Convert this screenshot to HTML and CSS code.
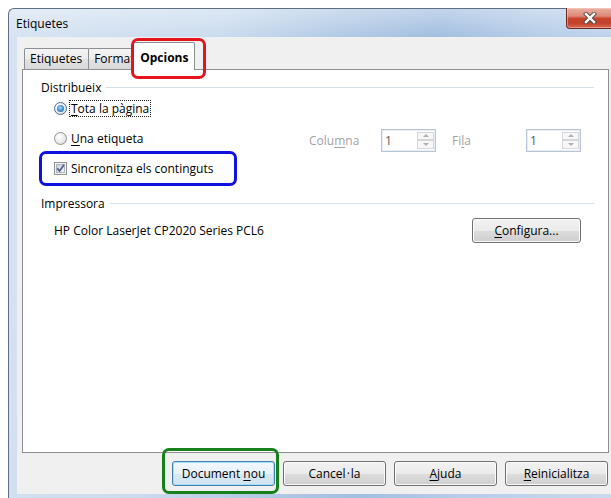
FILE: index.html
```html
<!DOCTYPE html>
<html lang="ca">
<head>
<meta charset="utf-8">
<title>Etiquetes</title>
<link rel="stylesheet" href="styles.css">
</head>
<body>
<div class="window">
  <div class="titlebar">
    <span class="title">Etiquetes</span>
    <span class="close" aria-label="Tanca">
      <svg width="14" height="12" viewBox="0 0 14 12">
        <path d="M3 2 L11 10 M11 2 L3 10" stroke="#4b4b4b" stroke-width="4.2" stroke-linecap="square" fill="none"/>
        <path d="M3 2 L11 10 M11 2 L3 10" stroke="#ffffff" stroke-width="2.4" stroke-linecap="square" fill="none"/>
      </svg>
    </span>
  </div>

  <div class="client">
    <div class="tabs">
      <div class="tab">Etiquetes</div>
      <div class="tab tab-clip">Format</div>
      <div class="tab tab-active">Opcions<span class="mark mark-red"></span></div>
    </div>

    <div class="panel">
      <div class="group-head">Distribueix</div>

      <div class="row row-first">
        <span class="radio radio-on"></span>
        <span class="label focus"><u>T</u>ota la pàgina</span>
      </div>

      <div class="row">
        <span class="radio"></span>
        <span class="label"><u>U</u>na etiqueta</span>
        <span class="spin-group">
          <span class="spin-label">Colu<u>m</u>na</span>
          <span class="spin">
            <span class="spin-val">1</span>
            <span class="spin-btns">
              <span class="spin-up"></span>
              <span class="spin-dn"></span>
            </span>
          </span>
          <span class="spin-label spin-label-2">Fi<u>l</u>a</span>
          <span class="spin">
            <span class="spin-val">1</span>
            <span class="spin-btns">
              <span class="spin-up"></span>
              <span class="spin-dn"></span>
            </span>
          </span>
        </span>
      </div>

      <div class="row">
        <span class="check-label">
          <svg class="chk" width="13" height="13" viewBox="0 0 13 13">
            <defs>
              <linearGradient id="chkfill" x1="0" y1="0" x2="1" y2="1">
                <stop offset="0" stop-color="#cbcfd5"/>
                <stop offset="1" stop-color="#f6f6f6"/>
              </linearGradient>
            </defs>
            <rect x="0.5" y="0.5" width="12" height="12" fill="#f4f4f4" stroke="#8e8f8f"/>
            <rect x="2.5" y="2.5" width="8" height="8" fill="url(#chkfill)" stroke="#aeb3b9"/>
            <path d="M3.2 6.3 L5.6 8.9 L10 2.8" stroke="#4a5c8c" stroke-width="1.7" fill="none"/>
          </svg>
          <span class="label">Sincroni<u>t</u>za els continguts</span>
          <span class="mark mark-blue"></span>
        </span>
      </div>

      <div class="group-head group-head-2">Impressora</div>

      <div class="row row-printer">
        <span class="label">HP Color LaserJet CP2020 Series PCL6</span>
        <button class="btn btn-config"><u>C</u>onfigura...</button>
      </div>
    </div>

    <div class="actions">
      <button class="btn btn-default">Document <u>n</u>ou<span class="mark mark-green"></span></button>
      <button class="btn">Cancel<span class="middot">·</span>la</button>
      <button class="btn"><u>A</u>juda</button>
      <button class="btn"><u>R</u>einicialitza</button>
    </div>
  </div>
</div>
</body>
</html>
```

FILE: styles.css
```css
* {
  box-sizing: border-box;
}

html,
body {
  margin: 0;
  padding: 0;
}

body {
  width: 611px;
  height: 498px;
  overflow: hidden;
  background: #ffffff;
  font-family: "Segoe UI", "Open Sans", "Noto Sans", sans-serif;
  font-size: 12px;
  color: #000000;
}

u {
  text-decoration: underline;
  text-underline-offset: 2px;
}

/* ---------- window frame ---------- */

.window {
  margin: 8px 0 0 8px;
  width: 614px;
  height: 500px;
  border: 1px solid #5f6f82;
  border-right: none;
  border-radius: 6px 0 0 0;
  background:
    linear-gradient(180deg, rgba(255, 255, 255, 0.35) 0, rgba(255, 255, 255, 0) 28px),
    linear-gradient(100deg, #d6e3f2 0%, #cbdcef 30%, #b2cae5 48%, #a2bee0 62%, #b6cde8 76%, #c9dbef 100%);
  display: flex;
  flex-direction: column;
}

.titlebar {
  height: 28px;
  display: flex;
  align-items: flex-start;
  padding: 0 8px 0 7px;
  flex: none;
}

.title {
  padding-top: 7px;
  line-height: 16px;
}

.close {
  margin-left: auto;
  margin-top: -1px;
  width: 48px;
  height: 21px;
  border: 1px solid #6e2a20;
  border-top: none;
  border-radius: 0 0 4px 4px;
  background: linear-gradient(180deg, #eab0a3 0%, #dd8a78 40%, #c8442d 52%, #c2402a 75%, #d9684f 100%);
  box-shadow: inset 0 0 0 1px rgba(255, 220, 210, 0.45);
  display: flex;
  align-items: center;
  justify-content: center;
}

.client {
  margin: 0 8px;
  height: 457px;
  background: #f0f0f0;
  display: flex;
  flex-direction: column;
  flex: none;
}

/* ---------- tabs ---------- */

.tabs {
  height: 32px;
  display: flex;
  align-items: flex-end;
  padding-left: 7px;
  position: relative;
  z-index: 1;
  flex: none;
}

.tab {
  height: 21px;
  padding: 0 6px 0 5px;
  border: 1px solid #8c8e94;
  border-bottom: none;
  border-radius: 2px 2px 0 0;
  background: linear-gradient(180deg, #f4f4f4 0%, #ececec 50%, #e2e2e2 51%, #d9d9d9 100%);
  line-height: 19px;
  white-space: nowrap;
  margin-right: -1px;
}

.tab-clip {
  width: 48px;
  padding: 0 0 0 5px;
  overflow: hidden;
}

.tab-active {
  position: relative;
  height: 28px;
  margin-left: -2px;
  margin-bottom: -1px;
  padding: 5px 6px 0 6px;
  background: #ffffff;
  font-weight: bold;
  overflow: visible;
}

/* ---------- tab page ---------- */

.panel {
  margin: 0 5px;
  height: 384px;
  border: 1px solid #8c8e94;
  background: #ffffff;
  padding: 8px 14px 0 18px;
  flex: none;
}

.group-head {
  display: flex;
  align-items: center;
  height: 18px;
}

.group-head::after {
  content: "";
  flex: 1;
  height: 1px;
  background: #d5dfe5;
  margin-left: 5px;
}

.group-head-2 {
  margin-top: 16px;
}

.row {
  display: flex;
  align-items: center;
  height: 20px;
  margin: 10px 13px 0 13px;
}

.row-first {
  margin-top: 2px;
}

.row-printer {
  height: 25px;
  margin-top: 6px;
  margin-left: 13px;
}

.label {
  white-space: nowrap;
  line-height: 15px;
}

.focus {
  outline: 1px dotted #222;
  padding: 0 1px;
  margin-left: -1px;
}

/* radio buttons */

.radio {
  position: relative;
  flex: none;
  width: 13px;
  height: 13px;
  margin-right: 4px;
  border-radius: 50%;
  border: 1px solid #8d9094;
  background: radial-gradient(circle at 40% 35%, #ffffff 0, #eaeaea 55%, #cfcfcf 100%);
}

.radio-on {
  border-color: #4f6c8c;
}

.radio-on::after {
  content: "";
  position: absolute;
  left: 2px;
  top: 2px;
  width: 7px;
  height: 7px;
  border-radius: 50%;
  background: radial-gradient(circle at 45% 40%, #b6e2fb 0, #4aa0de 40%, #1d5a93 100%);
}

/* spin boxes */

.spin-group {
  margin-left: auto;
  display: flex;
  align-items: center;
  margin-top: 4px;
}

.spin-label {
  width: 72px;
  color: #a3a3a3;
}

.spin-label-2 {
  width: 90px;
  padding-left: 16px;
}

.spin {
  width: 55px;
  height: 23px;
  border: 1px solid #b8c5d6;
  background: #ffffff;
  display: flex;
  padding: 2px 1px 2px 3px;
  box-shadow: inset 0 0 0 1px #e8edf3;
}

.spin-val {
  flex: 1;
  color: #5a5a5a;
  line-height: 17px;
}

.spin-btns {
  width: 17px;
  display: flex;
  flex-direction: column;
}

.spin-up,
.spin-dn {
  flex: 1;
  border: 1px solid #d4d6d9;
  background: #f7f7f7;
  display: flex;
  align-items: center;
  justify-content: center;
}

.spin-up::before,
.spin-dn::before {
  content: "";
  border-left: 3px solid transparent;
  border-right: 3px solid transparent;
}

.spin-up::before {
  border-bottom: 3px solid #b0b0b0;
}

.spin-dn::before {
  border-top: 3px solid #b0b0b0;
}

/* checkbox */

.check-label {
  position: relative;
  display: flex;
  align-items: center;
}

.chk {
  flex: none;
  margin-right: 4px;
}

/* ---------- buttons ---------- */

.btn {
  position: relative;
  height: 25px;
  width: 103px;
  padding: 0;
  border: 1px solid #707070;
  border-radius: 3px;
  background: linear-gradient(180deg, #f2f2f2 0%, #ebebeb 50%, #dddddd 51%, #cfcfcf 100%);
  box-shadow: inset 0 0 0 1px #fbfbfb;
  font: inherit;
  color: #000000;
  line-height: 21px;
}

.middot {
  margin: 0 1px;
}

.btn-config {
  margin-left: auto;
  width: 109px;
}

.btn-default {
  border-color: #3c7fb1;
  box-shadow: inset 0 0 0 1px #a9dcf6;
  background: linear-gradient(180deg, #f3f9fd 0%, #e6f1f9 50%, #d8e9f5 51%, #cfe3f1 100%);
}

.actions {
  display: flex;
  justify-content: flex-end;
  gap: 8px;
  padding: 8px 6px 0 0;
}

/* ---------- highlight frames ---------- */

.mark {
  position: absolute;
  border: 3px solid;
  border-radius: 7px;
  pointer-events: none;
}

.mark-red {
  border-color: #e5141c;
  left: -3px;
  top: -5px;
  right: -12px;
  bottom: -9px;
}

.mark-blue {
  border-color: #1010e0;
  left: -15px;
  top: -10px;
  right: -24px;
  bottom: -10px;
}

.mark-green {
  border-color: #17801a;
  left: -11px;
  top: -14px;
  right: -5px;
  bottom: -9px;
}
```
